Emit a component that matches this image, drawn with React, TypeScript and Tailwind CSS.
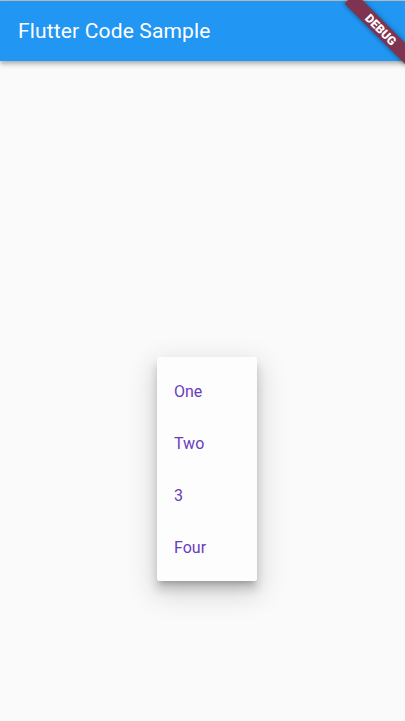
const ITEMS = ['One', 'Two', '3', 'Four'];

export default function App() {
  return (
    <div
      className="relative w-[405px] h-[721px] overflow-hidden bg-[#fafafa] flex flex-col"
      style={{ fontFamily: 'Roboto, "Noto Sans", sans-serif' }}
    >
      <div className="h-px bg-[#bdbdbd]" />
      <header className="relative z-10 h-[60px] bg-[#2196f3] flex items-center px-[18px] shadow-[0_2px_4px_rgba(0,0,0,0.2),0_4px_5px_rgba(0,0,0,0.14)]">
        <h1 className="text-white text-[21px] tracking-[0.15px] font-normal leading-none pt-px">Flutter Code Sample</h1>
      </header>

      <main className="flex-1 flex items-start justify-start pt-[296px] pl-[157px]">
        <div className="w-[100px] bg-[#fdfdfd] rounded-[2px] py-2 shadow-[0_8px_10px_1px_rgba(0,0,0,0.14),0_5px_5px_-3px_rgba(0,0,0,0.2),0_10px_28px_4px_rgba(0,0,0,0.14)]">
          {ITEMS.map((item) => (
            <div key={item} className="h-[52px] flex items-center px-[17px] pt-px text-[16px] text-[#6a3cbc]">
              {item}
            </div>
          ))}
        </div>
      </main>

      <div className="absolute z-20 left-[337px] top-[22px] w-[88px] h-[15px] rotate-45 bg-[#7e3350] flex items-center justify-center shadow-[0_0_5px_rgba(0,0,0,0.45)]">
        <span className="text-white text-[12px] font-black leading-none">DEBUG</span>
      </div>
    </div>
  );
}
